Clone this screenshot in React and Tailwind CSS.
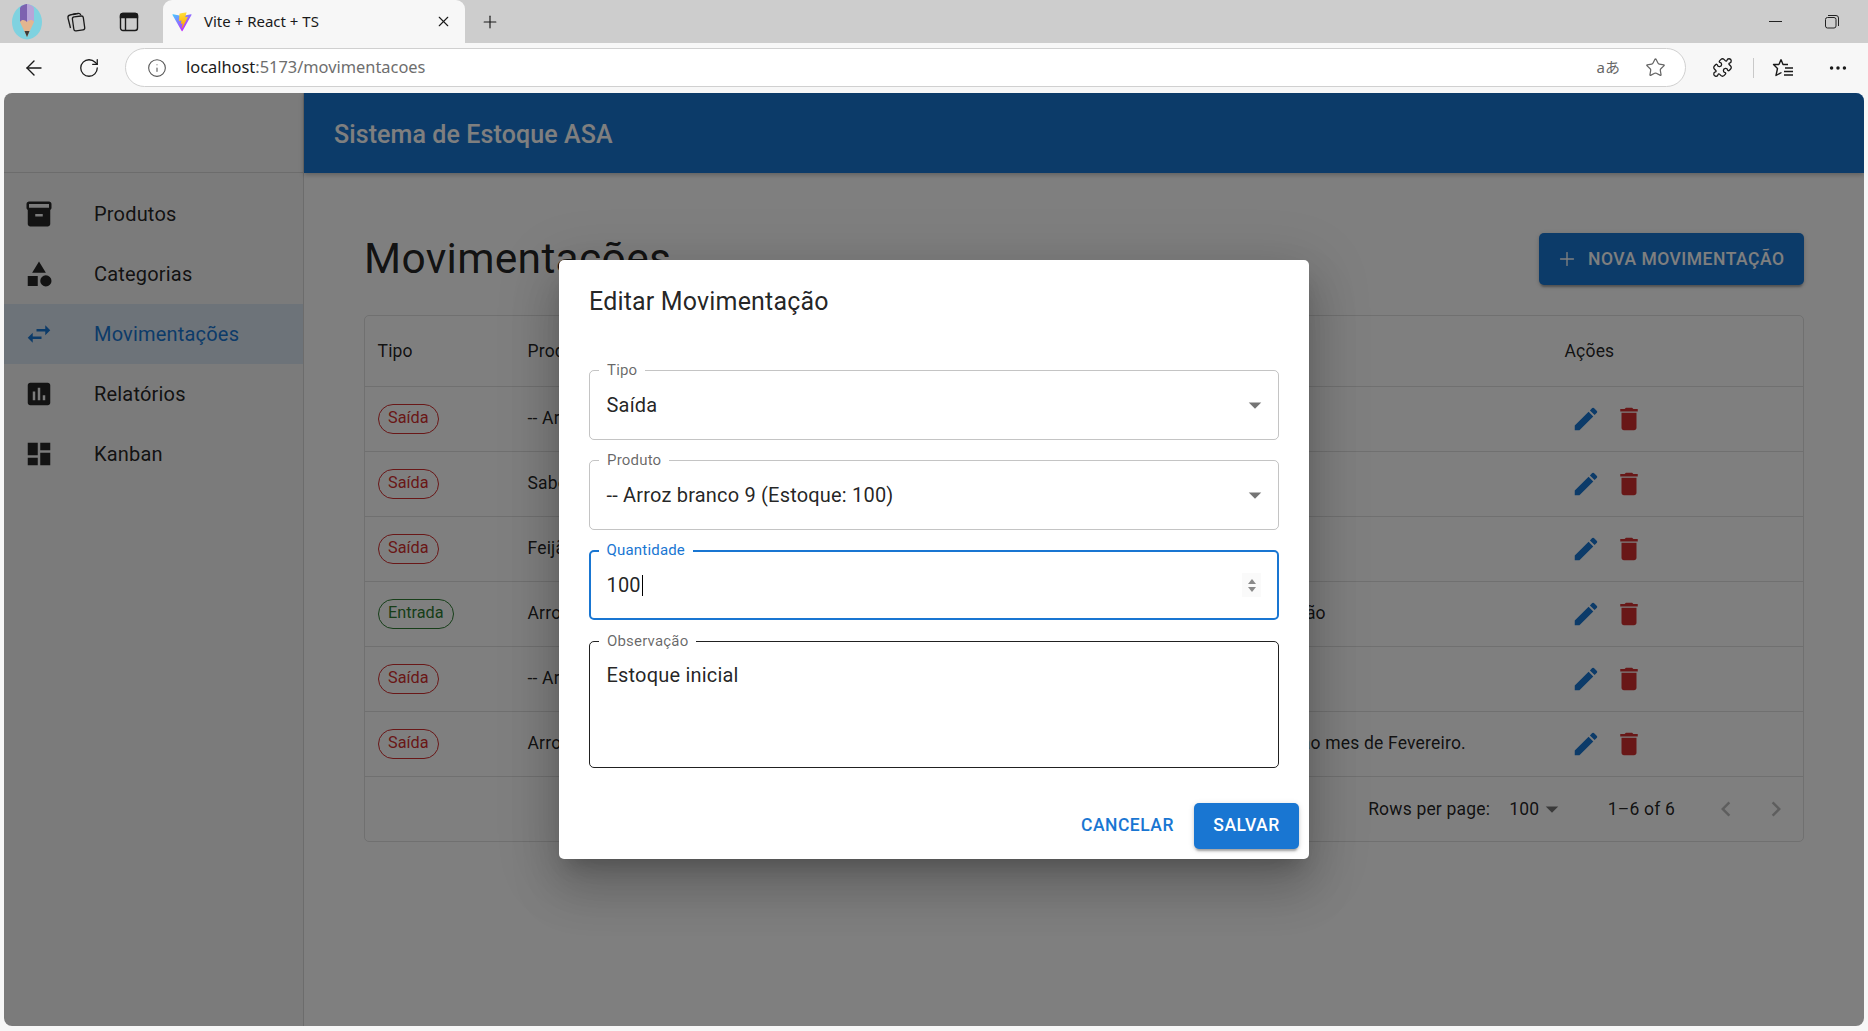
import {
  ArrowLeft,
  Info,
  MoreHorizontal,
  Plus,
  Puzzle,
  RotateCw,
  Star,
  X,
} from "lucide-react";

const menuItems = [
  {
    label: "Produtos",
    icon: "M20 2H4c-1 0-2 .9-2 2v3.01c0 .72.43 1.34 1 1.69V20c0 1.1 1.1 2 2 2h14c.9 0 2-.9 2-2V8.7c.57-.35 1-.97 1-1.69V4c0-1.1-1-2-2-2zm-5 12H9v-2h6v2zm5-7H4V4l16-.02V7z",
  },
  {
    label: "Categorias",
    icon: "M12 2l-5.5 9h11zM3 13.5h8v8H3zM17.5 13a4.5 4.5 0 1 0 0 9 4.5 4.5 0 0 0 0-9z",
  },
  {
    label: "Movimentações",
    icon: "M6.99 11L3 15l3.99 4v-3H14v-2H6.99v-3zM21 9l-3.99-4v3H10v2h7.01v3L21 9z",
    active: true,
  },
  {
    label: "Relatórios",
    icon: "M19 3H5c-1.1 0-2 .9-2 2v14c0 1.1.9 2 2 2h14c1.1 0 2-.9 2-2V5c0-1.1-.9-2-2-2zM9 17H7v-7h2v7zm4 0h-2V7h2v10zm4 0h-2v-4h2v4z",
  },
  {
    label: "Kanban",
    icon: "M3 13h8V3H3v10zm0 8h8v-6H3v6zm10 0h8V11h-8v10zm0-18v6h8V3h-8z",
  },
];

const rows = [
  { tipo: "Saída", produto: "-- Arroz branco 9", obs: "" },
  { tipo: "Saída", produto: "Sabonete", obs: "" },
  { tipo: "Saída", produto: "Feijão", obs: "" },
  { tipo: "Entrada", produto: "Arroz", obs: "Compra: reposição" },
  { tipo: "Saída", produto: "-- Arroz branco 9", obs: "" },
  { tipo: "Saída", produto: "Arroz", obs: "Saída referente ao mes de Fevereiro." },
];

function MuiIcon({ d, className }) {
  return (
    <svg viewBox="0 0 24 24" fill="currentColor" className={className} aria-hidden="true">
      <path d={d} />
    </svg>
  );
}

function Avatar() {
  return (
    <svg viewBox="0 0 30 36" className="h-[36px] w-[30px]">
      <ellipse cx="15" cy="18" rx="15" ry="17.5" fill="#7fd2e0" />
      <path d="M8 4 C9 1 14 0 15 0 L15 18 L8 18 Z" fill="#7d62b0" />
      <path d="M15 0 C17 0 21 2 22 4 L22 18 L15 18 Z" fill="#b7a4d8" />
      <path d="M8 18 C10 15 13 16 15 18 C17 16 20 15 22 18 L15 33 Z" fill="#e3b58f" />
      <path d="M12.5 27 L17.5 27 L15 33 Z" fill="#3d3a3a" />
    </svg>
  );
}

function ViteLogo() {
  return (
    <svg viewBox="0 0 410 404" className="h-[20px] w-[20px]" fill="none">
      <path
        d="M399.641 59.5246L215.643 388.545C211.844 395.338 202.084 395.378 198.228 388.618L10.5817 59.5563C6.38087 52.1896 12.6802 43.2665 21.0281 44.7586L205.223 77.6824C206.398 77.8924 207.601 77.8904 208.776 77.6763L389.119 44.8058C397.439 43.2894 403.768 52.1434 399.641 59.5246Z"
        fill="url(#viteA)"
      />
      <path
        d="M292.965 1.5744L156.801 28.2552C154.563 28.6937 152.906 30.5903 152.771 32.8664L144.395 174.33C144.198 177.662 147.258 180.248 150.51 179.498L188.42 170.749C191.967 169.931 195.172 173.055 194.443 176.622L183.18 231.775C182.422 235.487 185.907 238.661 189.532 237.56L212.947 230.446C216.577 229.344 220.065 232.527 219.297 236.242L201.398 322.875C200.278 328.294 207.486 331.249 210.492 326.603L212.5 323.5L323.454 102.072C325.312 98.3645 322.108 94.137 318.036 94.9228L279.014 102.454C275.347 103.161 272.227 99.746 273.262 96.1583L298.731 7.86689C299.767 4.27314 296.636 0.855181 292.965 1.5744Z"
        fill="url(#viteB)"
      />
      <defs>
        <linearGradient id="viteA" x1="6" y1="33" x2="235" y2="344" gradientUnits="userSpaceOnUse">
          <stop stopColor="#41D1FF" />
          <stop offset="1" stopColor="#BD34FE" />
        </linearGradient>
        <linearGradient id="viteB" x1="194" y1="8" x2="236" y2="293" gradientUnits="userSpaceOnUse">
          <stop stopColor="#FFEA83" />
          <stop offset="0.08" stopColor="#FFDD35" />
          <stop offset="1" stopColor="#FFA800" />
        </linearGradient>
      </defs>
    </svg>
  );
}

function TabBar() {
  return (
    <div className="flex h-[43px] items-center bg-[#cdcdcd] text-[#1a1a1a]">
      <div className="flex w-[54px] justify-center">
        <Avatar />
      </div>
      <div className="flex w-[44px] justify-center">
        <svg viewBox="0 0 22 22" className="h-[22px] w-[22px]" fill="none" stroke="currentColor" strokeWidth="1.3">
          <rect x="8" y="5.5" width="11" height="14" rx="2" transform="rotate(-8 13 12)" />
          <path d="M5.5 17 L3 7 Q2.6 4.5 5 4 L11 2.6" />
          <path d="M8 3.5 L13 2.5 Q15 2.2 15.8 4" />
        </svg>
      </div>
      <div className="ml-[9px] flex w-[44px] justify-center">
        <svg viewBox="0 0 20 20" className="h-[20px] w-[20px]" fill="none" stroke="currentColor" strokeWidth="1.4">
          <rect x="1.5" y="1.5" width="17" height="17" rx="2.5" />
          <path d="M1.5 5.5h17v-2a2 2 0 0 0-2-2h-13a2 2 0 0 0-2 2z" fill="currentColor" />
          <path d="M6.5 5.5v13" />
        </svg>
      </div>
      <div className="ml-[12px] flex h-[43px] w-[302px] items-center self-end rounded-t-[9px] bg-[#f7f7f7] pl-[9px] pr-[13px]">
        <ViteLogo />
        <span className="ml-[12px] flex-1 font-['Noto_Sans',sans-serif] text-[15px] text-[#1a1a1a]">
          Vite + React + TS
        </span>
        <X className="h-[17px] w-[17px]" strokeWidth={1.6} />
      </div>
      <div className="ml-[15px] flex w-[20px] justify-center">
        <Plus className="h-[22px] w-[22px]" strokeWidth={1.4} />
      </div>
      <div className="ml-auto flex items-center">
        <div className="h-[1.5px] w-[13px] bg-[#222]" />
        <svg viewBox="0 0 14 14" className="ml-[43px] mr-[29px] h-[14px] w-[14px]" fill="none" stroke="#222" strokeWidth="1">
          <rect x="0.5" y="2.5" width="10.5" height="10.5" rx="2" />
          <path d="M3 .5h8a2.5 2.5 0 0 1 2.5 2.5v8" />
        </svg>
      </div>
    </div>
  );
}

function AddressBar() {
  return (
    <div className="flex h-[50px] items-center bg-[#f7f7f7] pb-[1px] text-[#1a1a1a]">
      <div className="flex w-[67px] justify-center">
        <ArrowLeft className="h-[24px] w-[24px]" strokeWidth={1.4} />
      </div>
      <div className="flex w-[43px] justify-center">
        <RotateCw className="h-[22px] w-[22px]" strokeWidth={1.4} />
      </div>
      <div className="ml-[15px] flex h-[39px] w-[1561px] items-center rounded-full border border-[#d0d0d0] bg-white">
        <Info className="ml-[21px] h-[20px] w-[20px] text-[#555]" strokeWidth={1.3} />
        <span className="ml-[19px] flex-1 font-['Noto_Sans',sans-serif] text-[16.4px]">
          localhost<span className="text-[#6e6e6e]">:5173/movimentacoes</span>
        </span>
        <span className="mr-[25px] font-['Noto_Sans','Noto_Sans_CJK_JP',sans-serif] text-[15px] text-[#666]">aあ</span>
        <Star className="mr-[19px] h-[21px] w-[21px] text-[#666]" strokeWidth={1.4} />
      </div>
      <Puzzle className="ml-[26px] h-[21px] w-[21px]" strokeWidth={1.5} />
      <div className="ml-[20px] h-[20px] w-[1px] bg-[#c9c9c9]" />
      <svg viewBox="0 0 22 22" className="ml-[18px] h-[22px] w-[22px]" fill="none" stroke="currentColor" strokeWidth="1.4">
        <path d="M9 2.5 L11 7.5 H16 M7 7.5 H1.5 L5.5 11.5 L4 18.5 L9.5 15.5 M9 2.5 L7 7.5" strokeLinejoin="round" />
        <path d="M13 11h8M12 14.5h9M12 18h9" />
      </svg>
      <MoreHorizontal className="ml-[33px] h-[22px] w-[22px]" strokeWidth={1.8} />
    </div>
  );
}

function Sidebar() {
  return (
    <aside className="flex w-[300px] flex-none flex-col border-r border-black/12 bg-[#f6f6f6]">
      <div className="h-[80px] flex-none border-b border-black/12" />
      <nav className="pt-[11px]">
        {menuItems.map((item) => (
          <div
            key={item.label}
            className={
              item.active
                ? "flex h-[60px] items-center bg-[#1976d2]/[0.12] pl-[20px] text-[#1976d2]"
                : "flex h-[60px] items-center pl-[20px] text-black/87"
            }
          >
            <MuiIcon
              d={item.icon}
              className={item.active ? "h-[30px] w-[30px] text-[#1976d2]" : "h-[30px] w-[30px] text-[#262626]"}
            />
            <span className="ml-[40px] text-[20px] tracking-[0.19px]">{item.label}</span>
          </div>
        ))}
      </nav>
    </aside>
  );
}

function Chip({ tipo }) {
  const classes =
    tipo === "Entrada"
      ? "border-[#2e7d32] text-[#2e7d32]"
      : "border-[#d32f2f] text-[#d32f2f]";
  return (
    <span className={`flex h-[30px] items-center rounded-full border px-[9.5px] text-[16.25px] tracking-normal ${classes}`}>
      {tipo}
    </span>
  );
}

function MovimentacoesTable() {
  const columns = "grid grid-cols-[150px_648px_389px_1fr] items-center";
  return (
    <div className="rounded-[5px] border border-[#e0e0e0] text-[17.5px] tracking-[0.19px] text-black/87">
      <div className={`${columns} h-[69.5px]`}>
        <div className="pl-[12.5px]">Tipo</div>
        <div className="pl-[12.5px]">Produto</div>
        <div className="pl-[12.5px]">Observação</div>
        <div className="pl-[12.5px]">Ações</div>
      </div>
      {rows.map((row, i) => (
        <div key={i} className={`${columns} h-[65px] border-t border-[#e0e0e0]`}>
          <div className="flex pl-[12.5px]">
            <Chip tipo={row.tipo} />
          </div>
          <div className="pl-[12.5px]">{row.produto}</div>
          <div className="pl-[12.5px]">{row.obs}</div>
          <div className="flex gap-[13px] pl-[18.5px]">
            <MuiIcon
              d="M3 17.25V21h3.75L17.81 9.94l-3.75-3.75L3 17.25zM20.71 7.04c.39-.39.39-1.02 0-1.41l-2.34-2.34a.9959.9959 0 0 0-1.41 0l-1.83 1.83 3.75 3.75 1.83-1.83z"
              className="h-[30px] w-[30px] text-[#1976d2]"
            />
            <MuiIcon
              d="M6 19c0 1.1.9 2 2 2h8c1.1 0 2-.9 2-2V7H6v12zM19 4h-3.5l-1-1h-5l-1 1H5v2h14V4z"
              className="h-[30px] w-[30px] text-[#d32f2f]"
            />
          </div>
        </div>
      ))}
      <div className="flex h-[65.5px] items-center justify-end border-t border-[#e0e0e0] pr-[2px] pt-[1px]">
        <span>Rows per page:</span>
        <span className="ml-[19px]">100</span>
        <MuiIcon d="M7 10l5 5 5-5z" className="-ml-[2.5px] h-[30px] w-[30px] text-black/54" />
        <span className="ml-[41px]">1–6 of 6</span>
        <div className="ml-[26px] flex">
          <div className="flex w-[50px] justify-center">
            <MuiIcon d="M15.41 16.59 10.83 12l4.58-4.59L14 6l-6 6 6 6z" className="h-[30px] w-[30px] text-black/26" />
          </div>
          <div className="flex w-[50px] justify-center">
            <MuiIcon d="M8.59 16.59 13.17 12 8.59 7.41 10 6l6 6-6 6z" className="h-[30px] w-[30px] text-black/26" />
          </div>
        </div>
      </div>
    </div>
  );
}

function OutlinedField({ label, focused, dark, tall, children }) {
  let box = "border border-black/23";
  let labelColor = "text-black/60 left-[9px] -top-[10px]";
  let size = "h-[70px] items-center";
  if (focused) {
    box = "border-[2.5px] border-[#1976d2]";
    labelColor = "text-[#1976d2] left-[7.5px] -top-[11px]";
    size = "mb-[1px] h-[70px] items-center";
  }
  if (dark) {
    box = "border-[1.25px] border-black/87";
    labelColor = "text-black/60 left-[9px] -top-[10.5px]";
  }
  if (tall) size = "h-[127px] items-start pt-[17.5px]";
  return (
    <div className={`relative flex rounded-[5px] px-[14px] text-[20px] tracking-[0.19px] text-black/87 ${box} ${size}`}>
      <span className={`absolute bg-white px-[8px] text-[15px] leading-[18px] ${labelColor}`}>
        {label}
      </span>
      {children}
    </div>
  );
}

function EditDialog() {
  return (
    <div className="flex w-[750px] flex-col rounded-[5px] bg-white shadow-[0_14px_19px_-9px_rgba(0,0,0,0.2),0_30px_48px_4px_rgba(0,0,0,0.14),0_11px_58px_10px_rgba(0,0,0,0.12)]">
      <h2 className="px-[30px] pb-[18.5px] pt-[21.5px] text-[25px] leading-[40px] tracking-[0.17px] text-black/87">
        Editar Movimentação
      </h2>
      <div className="flex flex-col gap-[20px] px-[30px] pb-[25px] pt-[30px]">
        <OutlinedField label="Tipo">
          <span className="flex-1 pl-[2.5px]">Saída</span>
          <MuiIcon d="M7 10l5 5 5-5z" className="-mr-[6px] h-[30px] w-[30px] text-black/54" />
        </OutlinedField>
        <OutlinedField label="Produto">
          <span className="flex-1 pl-[2.5px]">-- Arroz branco 9 (Estoque: 100)</span>
          <MuiIcon d="M7 10l5 5 5-5z" className="-mr-[6px] h-[30px] w-[30px] text-black/54" />
        </OutlinedField>
        <OutlinedField label="Quantidade" focused>
          <span className="flex flex-1 items-center pl-[1.5px]">
            100
            <span className="ml-[1px] h-[21px] w-[1px] bg-black" />
          </span>
          <span className="mr-[2px] flex h-[24px] w-[19px] flex-col items-center justify-center gap-[3px] bg-[#fafafa]">
            <span className="h-0 w-0 border-x-[4.5px] border-b-[5.5px] border-x-transparent border-b-[#8a8a8a]" />
            <span className="h-0 w-0 border-x-[4.5px] border-t-[5.5px] border-x-transparent border-t-[#8a8a8a]" />
          </span>
        </OutlinedField>
        <OutlinedField label="Observação" dark tall>
          <span className="pl-[2.5px]">Estoque inicial</span>
        </OutlinedField>
      </div>
      <div className="flex items-center justify-end gap-[10px] p-[10px]">
        <span className="px-[10px] pb-[1px] text-[17.5px] font-medium tracking-[0.5px] text-[#1976d2]">CANCELAR</span>
        <span className="flex h-[46px] w-[105px] items-center justify-center rounded-[5px] bg-[#1976d2] pb-[1px] text-[17.5px] font-medium tracking-[0.5px] text-white shadow-[0_4px_2px_-2px_rgba(0,0,0,0.2),0_2px_3px_0_rgba(0,0,0,0.14),0_1px_6px_0_rgba(0,0,0,0.12)]">
          SALVAR
        </span>
      </div>
    </div>
  );
}

export default function App() {
  return (
    <div className="flex h-screen w-screen flex-col overflow-hidden bg-[#f7f7f7] font-[Roboto,sans-serif]">
      <TabBar />
      <AddressBar />
      <div className="flex-1 overflow-hidden px-[4px] pb-[5px]">
        <div className="relative flex h-full overflow-hidden rounded-[8px] bg-white">
          <Sidebar />
          <div className="flex min-w-0 flex-1 flex-col">
            <header className="flex h-[80px] flex-none items-center bg-[#1976d2] px-[30px] pt-[3px] shadow-[0_2px_5px_rgba(0,0,0,0.25)]">
              <span className="text-[25px] font-medium tracking-[0.1px] text-white">Sistema de Estoque ASA</span>
            </header>
            <main className="px-[60px] pt-[60px]">
              <div className="mb-[30px] flex h-[52px] items-center justify-between">
                <h1 className="text-[42.5px] tracking-[0.31px] text-black/87">Movimentações</h1>
                <span className="flex h-[52px] w-[265px] items-center rounded-[5px] bg-[#1976d2] pl-[17px] text-[17.5px] font-medium tracking-[0.5px] text-white shadow-[0_4px_2px_-2px_rgba(0,0,0,0.2),0_2px_3px_0_rgba(0,0,0,0.14),0_1px_6px_0_rgba(0,0,0,0.12)]">
                  <Plus className="mr-[10px] h-[22px] w-[22px]" strokeWidth={1.5} />
                  NOVA MOVIMENTAÇÃO
                </span>
              </div>
              <MovimentacoesTable />
            </main>
          </div>
          <div className="absolute inset-0 flex items-center justify-center bg-black/50">
            <EditDialog />
          </div>
        </div>
      </div>
    </div>
  );
}
